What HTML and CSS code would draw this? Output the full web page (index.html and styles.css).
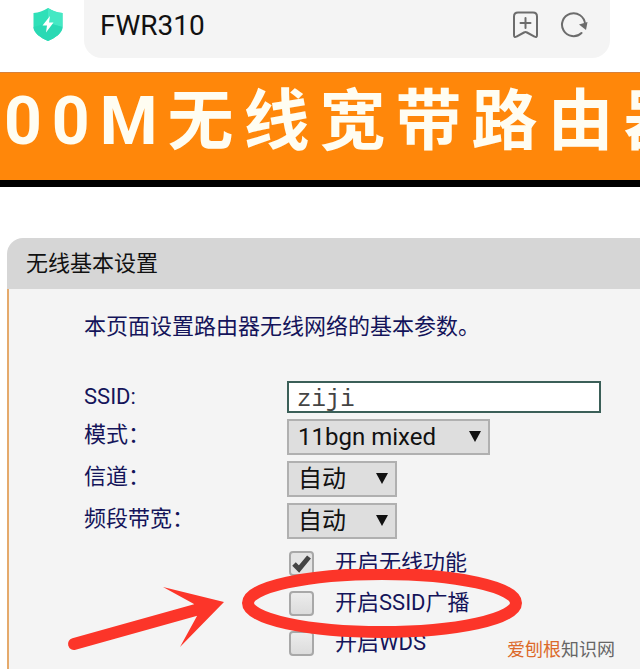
FILE: index.html
```
<!DOCTYPE html>
<html lang="zh-CN">
<head>
    <meta charset="UTF-8">
    <meta name="viewport" content="width=device-width, initial-scale=1.0">
    <title>FWR310</title>
    <link rel="stylesheet" href="styles.css">
</head>
<body>

    <header class="browser-bar">
        <svg class="shield" viewBox="0 0 30 33" aria-hidden="true">
            <path d="M15 0 C20 3 24 4.500 29.500 5 V19 C29.500 25 22 30 15 33 C8 30 0.500 25 0.500 19 V5 C6 4.500 10 3 15 0Z" fill="#2fe0b8"/>
            <path d="M15 0 C20 3 24 4.500 29.500 5 V19 L15 15Z" fill="#45e8c4"/>
            <path d="M0.500 19 L15 15 L29.500 19 C29.500 25 22 30 15 33 C8 30 0.500 25 0.500 19Z" fill="#2ad9b4"/>
            <path d="M17 8 L9.500 17.500 H14 L13 24.500 L20.500 14.500 H16Z" fill="#fff"/>
        </svg>
        <div class="address">
            <span class="address-text">FWR310</span>
            <button class="icon-btn" type="button" aria-label="添加书签">
                <svg viewBox="0 0 28 28">
                    <path d="M6 1.500 H21 Q25 1.500 25 5.500 V24 Q25 27 22.500 25.500 L15 21.500 Q13.500 20.700 12 21.500 L4.500 25.500 Q2 27 2 24 V5.500 Q2 1.500 6 1.500Z M13.500 7 V17 M8.500 12 H18.500"/>
                </svg>
            </button>
            <button class="icon-btn" type="button" aria-label="刷新">
                <svg viewBox="0 0 28 28">
                    <path d="M21.500 22 A11.500 11.500 0 1 1 25 13"/>
                    <path class="head" d="M19 13.500 L27.500 11 L26 19Z"/>
                </svg>
            </button>
        </div>
    </header>

    <h1 class="banner">00M无线宽带路由器</h1>

    <main class="panel">
        <h2 class="panel-title">无线基本设置</h2>
        <form class="panel-body">
            <p class="intro">本页面设置路由器无线网络的基本参数。</p>

            <div class="fields">
                <label for="ssid">SSID:</label>
                <input class="text-input" type="text" id="ssid" value="ziji">

                <label for="mode">模式：</label>
                <span class="select-box select-wide">
                    <select id="mode"><option>11bgn mixed</option></select>
                </span>

                <label for="channel">信道：</label>
                <span class="select-box">
                    <select id="channel"><option>自动</option></select>
                </span>

                <label for="bandwidth">频段带宽：</label>
                <span class="select-box">
                    <select id="bandwidth"><option>自动</option></select>
                </span>
            </div>

            <div class="checks">
                <label><input type="checkbox" checked>开启无线功能</label>
                <label><input type="checkbox">开启SSID广播</label>
                <label><input type="checkbox">开启WDS</label>
            </div>
        </form>

        <!-- arrow and ring around the SSID broadcast option -->
        <svg class="marks" viewBox="0 0 470 100" aria-hidden="true">
            <path d="M14 75 L150 37" stroke="#fc3529" stroke-width="12" stroke-linecap="round"/>
            <path d="M103 18 L164 33 L120 78 L137 47 L134 35Z" fill="#fc3529"/>
            <ellipse cx="322" cy="34" rx="134" ry="29" fill="none" stroke="#fc3529" stroke-width="12"/>
        </svg>
        <div class="site-mark"><span>爱刨根</span>知识网</div>
    </main>

</body>
</html>
```
FILE: styles.css
```
body {
    margin: 0;
    height: 100vh;
    overflow: hidden;
    background: #fff;
    color: #111;
    font-family: Roboto, "Noto Sans CJK SC", sans-serif;
}

.browser-bar {
    display: flex;
    height: 72px;
    padding: 0 30px 0 33px;
}
.shield {
    width: 30px;
    height: 33px;
    margin: 8px 21px 0 0;
}
.address {
    flex: 1;
    display: flex;
    align-items: center;
    gap: 20px;
    height: 50px;
    padding: 0 22px 8px 16px;
    background: #f4f4f4;
    border-radius: 0 0 18px 18px;
}
.address-text {
    flex: 1;
    font-size: 28px;
}
.icon-btn {
    width: 28px;
    height: 28px;
    padding: 0;
    border: none;
    background: none;
}
.icon-btn svg {
    display: block;
    fill: none;
    stroke: #6c6c6c;
    stroke-width: 2;
    stroke-linecap: round;
}
.icon-btn .head {
    fill: #6c6c6c;
    stroke: none;
}

.banner {
    box-sizing: border-box;
    height: 115px;
    margin: 0;
    padding-left: 4px;
    overflow: hidden;
    white-space: nowrap;
    background: #ff870a;
    border-top: 1px solid #d88038;
    border-bottom: 7px solid #000;
    color: #fffdf2;
    font-size: 66px;
    font-weight: bold;
    line-height: 98px;
    letter-spacing: 10px;
}

.panel {
    position: relative;
    margin: 51px 0 0 7px;
}
.panel-title {
    margin: 0;
    padding: 0 19px;
    background: #d6d6d6;
    border-top-left-radius: 16px;
    font-size: 22px;
    font-weight: normal;
    line-height: 51px;
}
.panel-body {
    padding: 22px 39px 20px 75px;
    border-left: 2px solid #e5aa6c;
    background: #f4f4f4;
    color: #14145a;
    font-size: 22px;
    line-height: 32px;
}
.intro {
    margin: 0 0 38px;
}

.fields {
    display: grid;
    grid-template-columns: 203px 1fr;
    row-gap: 6px;
}
.text-input {
    box-sizing: border-box;
    width: 100%;
    height: 32px;
    padding: 4px 8px 0;
    border: 2px solid #3b5f58;
    border-radius: 0;
    background: #fff;
    color: #444;
    font-family: "Liberation Mono", monospace;
    font-size: 24px;
}
.select-box {
    position: relative;
    justify-self: start;
    width: 110px;
    height: 36px;
}
.select-wide {
    width: 203px;
}
.select-box select {
    appearance: none;
    display: block;
    width: 100%;
    height: 100%;
    padding: 0 9px;
    border: 2px solid #b0b0b0;
    border-radius: 0;
    background: #dedede;
    color: #111;
    font-family: inherit;
    font-size: 24px;
}
.select-box::after {
    content: "";
    position: absolute;
    top: 12px;
    right: 9px;
    border: 6px solid transparent;
    border-top: 11px solid #111;
    border-bottom: none;
}

.checks {
    padding: 4px 0 0 205px;
}
.checks label {
    display: flex;
    align-items: center;
    gap: 21px;
    height: 40px;
}
.checks input {
    appearance: none;
    box-sizing: border-box;
    width: 25px;
    height: 25px;
    margin: 0;
    border: 2px solid #a8a8a8;
    border-radius: 4px;
    background: linear-gradient(#ececec, #dcdcdc);
}
.checks input:checked {
    background: url('data:image/svg+xml,<svg xmlns="http://www.w3.org/2000/svg" viewBox="0 0 21 21"><path d="M3 11 L8 16 L18 4" fill="none" stroke="%23444" stroke-width="5"/></svg>') #e4e4e4;
}

.marks {
    position: absolute;
    top: 331px;
    left: 53px;
    width: 470px;
    height: 100px;
}
.site-mark {
    position: absolute;
    top: 396px;
    right: 25px;
    color: #666;
    font-size: 18px;
    line-height: 32px;
}
.site-mark span {
    color: #dc6a2a;
}
```
